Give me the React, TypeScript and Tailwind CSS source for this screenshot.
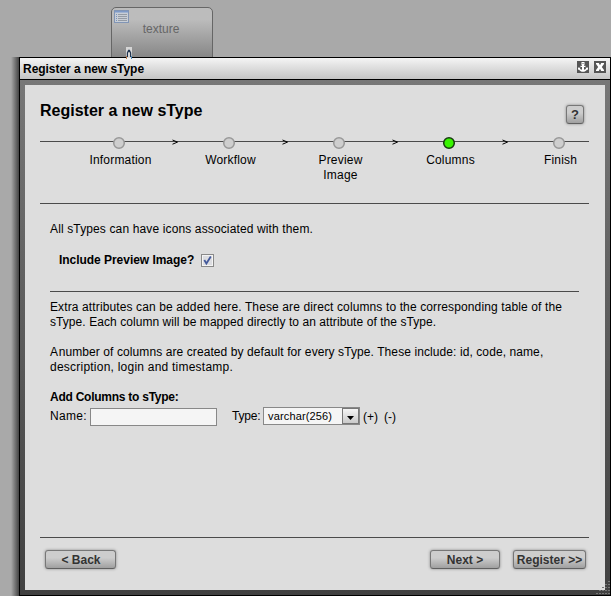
import React from "react";

function Rule({ className = "" }: { className?: string }) {
  return <div className={`h-px shrink-0 bg-[#4a4a4a] ${className}`} />;
}

function PipelineNode() {
  return (
    <div className="absolute left-[111px] top-[7px] h-[60px] w-[102px] rounded-[5px] border border-[#666] bg-linear-to-b from-[#bcbcbc] from-20% to-[#838383] to-90%">
      <svg className="absolute left-[2px] top-[2px]" width="15" height="13" viewBox="0 0 15 13" shapeRendering="crispEdges">
        <rect x="0.5" y="0.5" width="14" height="12" fill="#c8ced6" stroke="#8195b5" />
        <path d="M1 1.5h13" stroke="#7e9ac8" />
        <path d="M1 2.5h13" stroke="#a0b3d1" />
        <path d="M2 4.5h1M2 6.5h1M2 8.5h1M2 10.5h1" stroke="#7591bd" />
        <path d="M4 4.5h9M4 6.5h9M4 8.5h9M4 10.5h9" stroke="#949ba5" />
      </svg>
      <div className="pt-[14px] pr-[2px] text-center text-[12px] leading-[15px] text-[#666]">texture</div>
    </div>
  );
}

function ConnectorCaret() {
  return (
    <svg className="absolute left-[126px] top-[47px]" width="6" height="12" viewBox="0 0 6 12">
      <rect width="6" height="11" fill="#d6d6d6" />
      <path d="M1.4 10V6L2.6 3.4h.8L4.6 6v4" fill="none" stroke="#20344f" strokeWidth="1.2" />
      <path d="M.5 9v3" stroke="#b4784b" />
      <path d="M5.5 9v3" stroke="#4e87b4" />
    </svg>
  );
}

function TitleBar() {
  return (
    <div className="flex h-[21px] shrink-0 items-start bg-linear-to-b from-[#f5f5f5] to-[#c4c4c4] pl-[3px] pr-[4px] text-[12px] font-bold leading-[15px]">
      <span className="grow pt-[4px] tracking-[-0.04px]">Register a new sType</span>
      <svg className="mt-[3px]" width="12" height="12" viewBox="0 0 12 12">
        <rect width="12" height="12" fill="#555" />
        <rect x="4.5" y="1" width="3" height="3" fill="#fff" />
        <rect x="5.5" y="2" width="1" height="1" fill="#555" />
        <path d="M5 4h2v5H5zM3.5 4.7h5v1.4h-5z" fill="#fff" />
        <path d="M1 6.5l2.5.3-.6.9c.8.8 1.8 1 3.1 1s2.300-.2 3.100-1l-.6-.9 2.500-.3v2.500l-.8-.5C9 10 7.600 10.800 6 10.800S3 10 1.800 8.500L1 9z" fill="#fff" />
      </svg>
      <svg className="ml-[5px] mt-[3px]" width="12" height="12" viewBox="0 0 12 12">
        <rect width="12" height="12" fill="#555" />
        <path d="M2 2h2.800L6 4.200 7.200 2H10v1L7.800 6 10 9v1H7.200L6 7.800 4.800 10H2V9l2.200-3L2 3z" fill="#fff" />
      </svg>
    </div>
  );
}

const steps = ["Information", "Workflow", "Preview Image", "Columns", "Finish"];

function Stepper() {
  return (
    <div className="relative ml-[15px] mr-[16px] h-[67px] shrink-0">
      <Rule className="absolute inset-x-0 top-[5px]" />
      <div className="relative flex pl-[49px]">
        {steps.map((label, i) => (
          <React.Fragment key={label}>
            <div className="flex w-[60px] shrink-0 flex-col items-center">
              <svg width="14" height="14" viewBox="0 0 14 14">
                <circle
                  cx="7"
                  cy="7"
                  r="5.3"
                  fill={label === "Columns" ? "#39f500" : "#cecece"}
                  stroke={label === "Columns" ? "#173b0f" : "#989898"}
                  strokeWidth="1.5"
                />
              </svg>
              <div className="mt-[3px] pl-[3px] text-center leading-[15px] tracking-[0.2px]">{label}</div>
            </div>
            {i < steps.length - 1 && (
              <div className="flex w-[50px] shrink-0 justify-center pl-[3px]">
                <svg className="mt-[2px]" width="7" height="8" viewBox="0 0 7 8">
                  <path d="M.5 2l5 2.100-5 2.100" fill="none" stroke="#000" />
                </svg>
              </div>
            )}
          </React.Fragment>
        ))}
      </div>
    </div>
  );
}

function GlossButton({ children, className = "" }: { children: React.ReactNode; className?: string }) {
  return (
    <button
      className={`flex h-[19px] items-center justify-center whitespace-nowrap rounded-[3px] border border-[#777] border-b-[#606060] bg-linear-to-b from-[#cdcdcd] from-40% to-[#a0a0a0] font-bold leading-[15px] text-[#333] shadow-[0_0_3px_#888] ${className}`}
    >
      {children}
    </button>
  );
}

function Content() {
  return (
    <div className="flex h-[333px] shrink-0 flex-col pl-[25px] pr-[26px] pt-[18px]">
      <p className="h-[15px] whitespace-nowrap tracking-[0.132px]">All sTypes can have icons associated with them.</p>
      <div className="mt-[16px] flex h-[15px] items-start pl-[9px]">
        <span className="w-[142px] whitespace-nowrap font-bold tracking-[-0.04px]">Include Preview Image?</span>
        <svg className="mt-px" width="13" height="13" viewBox="0 0 13 13">
          <rect x=".5" y=".5" width="12" height="12" fill="#f4f4f4" stroke="#898989" />
          <rect x="2" y="2" width="9" height="9" fill="#dcdde1" />
          <path d="M3.3 6l2.1 3.5L9.8 2.5" fill="none" stroke="#43599b" strokeWidth="1.8" />
        </svg>
      </div>
      <Rule className="mt-[23px]" />
      <p className="mt-[8px] whitespace-nowrap">
        <span className="tracking-[0.12px]">
          Extra attributes can be added here. These are direct columns to the corresponding table of the
        </span>
        <br />
        <span className="tracking-[0.065px]">sType. Each column will be mapped directly to an attribute of the sType.</span>
      </p>
      <p className="mt-[15px] whitespace-nowrap">
        <span className="tracking-[-1px]">A </span>
        <span className="tracking-[0.09px]">
          number of columns are created by default for every sType. These include: id, code, name,
        </span>
        <br />
        <span className="tracking-[0.23px]">description, login and timestamp.</span>
      </p>
      <p className="mt-[15px] font-bold tracking-[-0.25px]">Add Columns to sType:</p>
      <div className="mt-[2px] flex items-start">
        <label className="mt-[2px] w-[40px] whitespace-nowrap tracking-[0.3px]">Name:</label>
        <div className="mt-px h-[18px] w-[127px] border border-[#888] bg-[#f5f5f5]" />
        <label className="ml-[15px] mt-[2px] w-[31px] whitespace-nowrap tracking-[-0.2px]">Type:</label>
        <div className="flex h-[18px] w-[97px] items-start border border-[#888] bg-[#f5f5f5] pl-[4px] text-[11px] leading-[16px]">
          <span className="grow tracking-[0.15px]">varchar(256)</span>
          <span className="flex h-[16px] w-[17px] items-center justify-center border border-[#777] bg-linear-to-b from-[#f5f5f5] to-[#cacaca]">
            <svg className="mt-[3px]" width="7" height="4" viewBox="0 0 7 4">
              <path d="M0 0h7L3.5 4z" />
            </svg>
          </span>
        </div>
        <span className="ml-[3px] mt-[3px] w-[21px]">(+)</span>
        <span className="mt-[3px]">(-)</span>
      </div>
    </div>
  );
}

export default function App() {
  return (
    <div
      className="relative h-[596px] w-[611px] overflow-hidden bg-[#a9a9a9] text-[12px] leading-[15px] text-black"
      style={{ fontFamily: '"Liberation Sans", Arial, sans-serif' }}
    >
      <PipelineNode />
      <div className="absolute left-[11px] top-[57px] h-[539px] w-[8px] bg-linear-to-r from-transparent to-[#444]" />
      <div className="absolute left-[19px] top-[57px] flex h-[539px] w-[592px] flex-col border border-black">
        <TitleBar />
        <div className="h-px shrink-0 bg-black" />
        <div className="relative grow bg-linear-to-b from-[#777] to-[#404040] p-[5px]">
          <div className="flex h-[505px] flex-col bg-[#ddd]">
            <div className="flex h-[51px] shrink-0 items-start pl-[15px]">
              <h1 className="w-[526px] pt-[16px] text-[16px] font-bold leading-[19px]">Register a new sType</h1>
              <GlossButton className="mt-[20px] w-[18px] text-[13px]">?</GlossButton>
            </div>
            <Stepper />
            <Rule className="ml-[15px] mr-[16px]" />
            <Content />
            <Rule className="ml-[15px] mr-[16px]" />
            <div className="flex items-start pl-[20px] pt-[12px]">
              <GlossButton className="w-[71px] pt-px pl-px">&lt; Back</GlossButton>
              <GlossButton className="ml-[314px] w-[70px] pt-px">Next &gt;</GlossButton>
              <GlossButton className="ml-[13px] w-[73px] pt-px">Register &gt;&gt;</GlossButton>
            </div>
          </div>
          <svg className="absolute bottom-[1px] right-0" width="14" height="14" viewBox="0 0 14 14" shapeRendering="crispEdges">
            <path d="M12 1.5h2M9 4.5h2M12 4.5h2M6 7.5h2M9 7.5h2M12 7.5h2M3 10.5h2M6 10.5h2M9 10.5h2M12 10.5h2M0 13.5h2M3 13.5h2M6 13.5h2M9 13.5h2M12 13.5h2" stroke="#777" />
          </svg>
        </div>
      </div>
      <ConnectorCaret />
    </div>
  );
}
